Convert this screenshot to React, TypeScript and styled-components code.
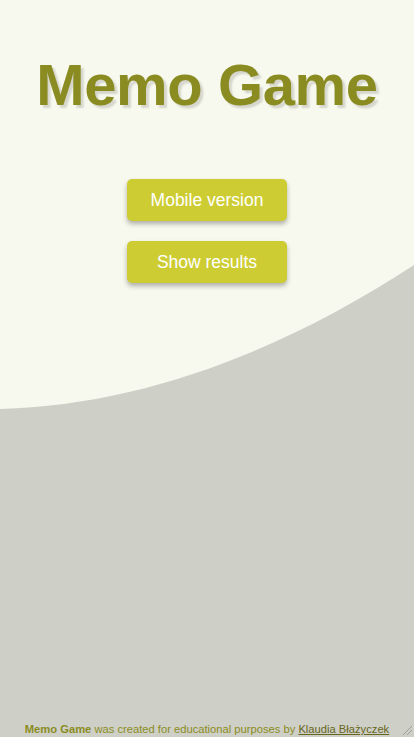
import { createGlobalStyle, styled } from "styled-components"

const GlobalStyle = createGlobalStyle`
	* {
		box-sizing: border-box;
	}

	html,
	body {
		margin: 0;
		padding: 0;
		font-family: "Liberation Sans", Arial, Helvetica, sans-serif;
		background: #f8f9ee;
	}
`

const Page = styled.main`
	position: relative;
	min-height: 100vh;
	overflow: hidden;
	display: flex;
	flex-direction: column;
	align-items: center;
	background: #f8f9ee;
`

const Wave = styled.svg`
	position: absolute;
	inset: 0;
	width: 100%;
	height: 100%;
	z-index: 0;
`

const Title = styled.h1`
	position: relative;
	z-index: 1;
	margin: 56px 0 0;
	font-size: 58px;
	line-height: 58px;
	font-weight: 700;
	letter-spacing: -0.4px;
	color: #8a8c22;
	text-shadow: 3px 3px 2px rgba(0, 0, 0, 0.14);
`

const Menu = styled.nav`
	position: relative;
	z-index: 1;
	margin-top: 65px;
	display: flex;
	flex-direction: column;
	gap: 20px;
`

const MenuButton = styled.button`
	width: 160px;
	height: 42px;
	border: none;
	border-radius: 5px;
	background: #cdcd33;
	color: #ffffff;
	font-family: inherit;
	font-size: 17.5px;
	box-shadow: 0 3px 5px rgba(0, 0, 0, 0.3);
	cursor: pointer;
`

const Footer = styled.footer`
	position: relative;
	z-index: 1;
	margin-top: auto;
	padding-bottom: 1px;
	font-size: 11.2px;
	line-height: 13px;
	color: #8a8c22;

	& strong {
		font-weight: 700;
	}

	& a {
		color: #66661c;
		text-decoration: underline;
	}
`

const Grip = styled.svg`
	position: absolute;
	right: 1px;
	bottom: 1px;
	width: 11px;
	height: 11px;
	z-index: 2;
`

export default function App() {
	return (
		<>
			<GlobalStyle />
			<Page>
				<Wave viewBox="0 0 414 737" preserveAspectRatio="none">
					<path
						d="M0 409 C138 405 276 355 414 265 L414 737 L0 737 Z"
						fill="#cecfc6"
					/>
				</Wave>
				<Title>Memo Game</Title>
				<Menu>
					<MenuButton>Mobile version</MenuButton>
					<MenuButton>Show results</MenuButton>
				</Menu>
				<Footer>
					<strong>Memo Game</strong> was created for educational purposes by{" "}
					<a href="#">Klaudia Błażyczek</a>
				</Footer>
				<Grip viewBox="0 0 11 11">
					<path d="M1 10 L10 1 M5 10 L10 5" stroke="#9c9d96" strokeWidth="1" />
				</Grip>
			</Page>
		</>
	)
}
